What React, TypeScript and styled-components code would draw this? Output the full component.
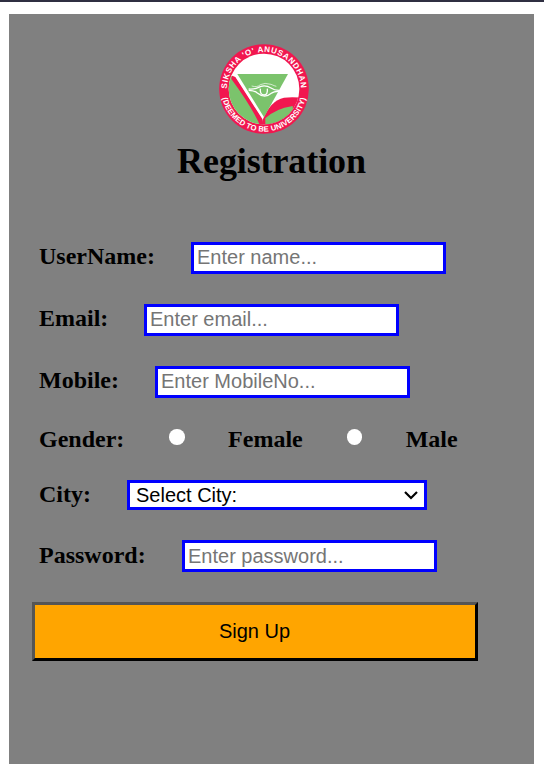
import React from "react";
import styled, { createGlobalStyle } from "styled-components";

const GlobalStyle = createGlobalStyle`
  * { box-sizing: border-box; }
  body {
    margin: 0;
    background: #fff;
    color: #000;
    font-family: "Liberation Serif", "Times New Roman", serif;
  }
`;

const Page = styled.main`
  height: 772px;
  border-top: 2px solid #2f2f41;
  padding: 12px 10px 8px 9px;
`;

const Panel = styled.form`
  display: flex;
  flex-direction: column;
  width: 525px;
  height: 750px;
  padding: 30px 30px 0;
  background: #808080;
`;

const Header = styled.header`
  display: flex;
  flex-direction: column;
  align-items: center;
  height: 198px;
`;

const Logo = styled.svg`
  display: block;
  width: 90px;
  height: 90px;
  margin-right: 15px;
`;

const Title = styled.h1`
  margin: 6px 0 0;
  font-size: 36px;
  line-height: 42px;
  letter-spacing: -0.1px;
`;

const Row = styled.div<{ $height?: number; $gap?: number }>`
  display: flex;
  align-items: baseline;
  height: ${({ $height = 32 }) => $height}px;
  margin-bottom: ${({ $gap = 30 }) => $gap}px;
`;

const Label = styled.label<{ $width?: number }>`
  flex: none;
  width: ${({ $width }) => ($width ? `${$width}px` : "auto")};
  font-size: 24px;
  font-weight: bold;
  line-height: 26px;
  white-space: nowrap;
`;

const Input = styled.input<{ $padTop?: number }>`
  width: 255px;
  height: 32px;
  padding: ${({ $padTop = 1 }) => `${$padTop}px 3px ${4 - $padTop}px`};
  border: 3px solid #00f;
  border-radius: 0;
  outline: none;
  background: #fff;
  font: 20px "Liberation Sans", Arial, sans-serif;
  &::placeholder { color: #757575; opacity: 1; }
`;

const Radio = styled.input`
  appearance: none;
  flex: none;
  align-self: flex-start;
  width: 15.6px;
  height: 15.6px;
  margin: 3px 43.5px 0 0;
  border-radius: 50%;
  background: #fff;
  &:checked { border: 4px solid #fff; background: #0075ff; }
`;

const SelectBox = styled.div`
  display: flex;
  align-items: baseline;
  width: 300px;
  height: 30px;
  border: 3px solid #00f;
  background: #fff;
`;

const Select = styled.select`
  appearance: none;
  flex: 1;
  height: 24px;
  padding: 0 0 0 6px;
  border: 0;
  outline: none;
  background: transparent;
  color: #000;
  font: 20px "Liberation Sans", Arial, sans-serif;
`;

const Chevron = styled.svg`
  align-self: center;
  width: 14px;
  height: 10px;
  margin-right: 6px;
  pointer-events: none;
`;

const SubmitButton = styled.button`
  width: 446px;
  height: 59px;
  margin-left: -7px;
  padding: 0 1px 0 0;
  border: 3px solid;
  border-color: #555 #000 #000 #555;
  background: #ffa500;
  color: #000;
  font: 20px "Liberation Sans", Arial, sans-serif;
`;

function UniversityLogo() {
  return (
    <Logo viewBox="21 17 270 270" role="img" aria-label="Siksha 'O' Anusandhan">
      <defs>
        <clipPath id="disc"><circle cx="156" cy="152" r="106" /></clipPath>
        <path id="ringTop" d="M 45 156 L 45 152 A 111 111 0 0 1 267 152 L 267 156" />
        <path id="ringBottom" d="M 28 152 A 128 128 0 0 0 284 152" />
      </defs>
      <circle cx="156" cy="152" r="134.5" fill="#f1174f" />
      <circle cx="156" cy="152" r="106" fill="#fff" />
      <g clipPath="url(#disc)">
        <path d="M40 110 L68 116 L150 243 L158 270 L40 250Z" fill="#7bc36c" />
        <path d="M60 112 L70 116 L151 242 L154 265 L146 265 Q120 206 58 122Z" fill="#f1174f" />
        <path d="M151 247 Q175 186 216 178 Q238 175 270 178 L260 235 L151 270Z" fill="#f1174f" />
        <path d="M160 240 Q190 211 242 203 L244 227 Q208 252 160 260Z" fill="#7bc36c" />
      </g>
      <path d="M76 107H228L156 237Z" fill="#7bc36c" />
      <g fill="none" stroke="#fff" strokeWidth="4">
        <path d="M110 152 Q128 153 138 148 Q157 137 177 149 Q186 156 202 156" />
        <path d="M110 156 Q128 156 136 164 Q158 182 178 165 Q184 160 202 158" />
        <path d="M145 151 Q143 169 156 170 Q168 170 166 151" />
        <path d="M119 143 Q136 148 145 139 Q158 132 177 138 Q188 143 193 144" strokeWidth="2" />
      </g>
      <g fill="#fff" fontFamily="Liberation Sans, Arial, sans-serif" fontWeight="bold" textAnchor="middle">
        <text fontSize="24" letterSpacing="2">
          <textPath href="#ringTop" startOffset="50%">SIKSHA 'O' ANUSANDHAN</textPath>
        </text>
        <text fontSize="23" letterSpacing="0.5">
          <textPath href="#ringBottom" startOffset="50%">(DEEMED TO BE UNIVERSITY)</textPath>
        </text>
      </g>
    </Logo>
  );
}

export default function App() {
  return (
    <>
      <GlobalStyle />
      <Page>
        <Panel onSubmit={(e) => e.preventDefault()}>
          <Header>
            <UniversityLogo />
            <Title>Registration</Title>
          </Header>
          <Row>
            <Label htmlFor="name" $width={152}>UserName:</Label>
            <Input id="name" placeholder="Enter name..." />
          </Row>
          <Row>
            <Label htmlFor="email" $width={105}>Email:</Label>
            <Input id="email" type="email" placeholder="Enter email..." />
          </Row>
          <Row $gap={28}>
            <Label htmlFor="mobile" $width={116}>Mobile:</Label>
            <Input id="mobile" placeholder="Enter MobileNo..." />
          </Row>
          <Row $height={27} $gap={27}>
            <Label as="span" $width={130}>Gender:</Label>
            <Radio id="female" type="radio" name="gender" />
            <Label htmlFor="female" $width={118.5}>Female</Label>
            <Radio id="male" type="radio" name="gender" />
            <Label htmlFor="male">Male</Label>
          </Row>
          <Row $height={30}>
            <Label htmlFor="city" $width={88}>City:</Label>
            <SelectBox>
              <Select id="city"><option>Select City:</option></Select>
              <Chevron viewBox="0 0 14 10">
                <path d="M1 2l6 6 6-6" fill="none" stroke="#000" strokeWidth="2.2" />
              </Chevron>
            </SelectBox>
          </Row>
          <Row>
            <Label htmlFor="password" $width={143}>Password:</Label>
            <Input id="password" type="password" placeholder="Enter password..." $padTop={2} />
          </Row>
          <SubmitButton type="submit">Sign Up</SubmitButton>
        </Panel>
      </Page>
    </>
  );
}
